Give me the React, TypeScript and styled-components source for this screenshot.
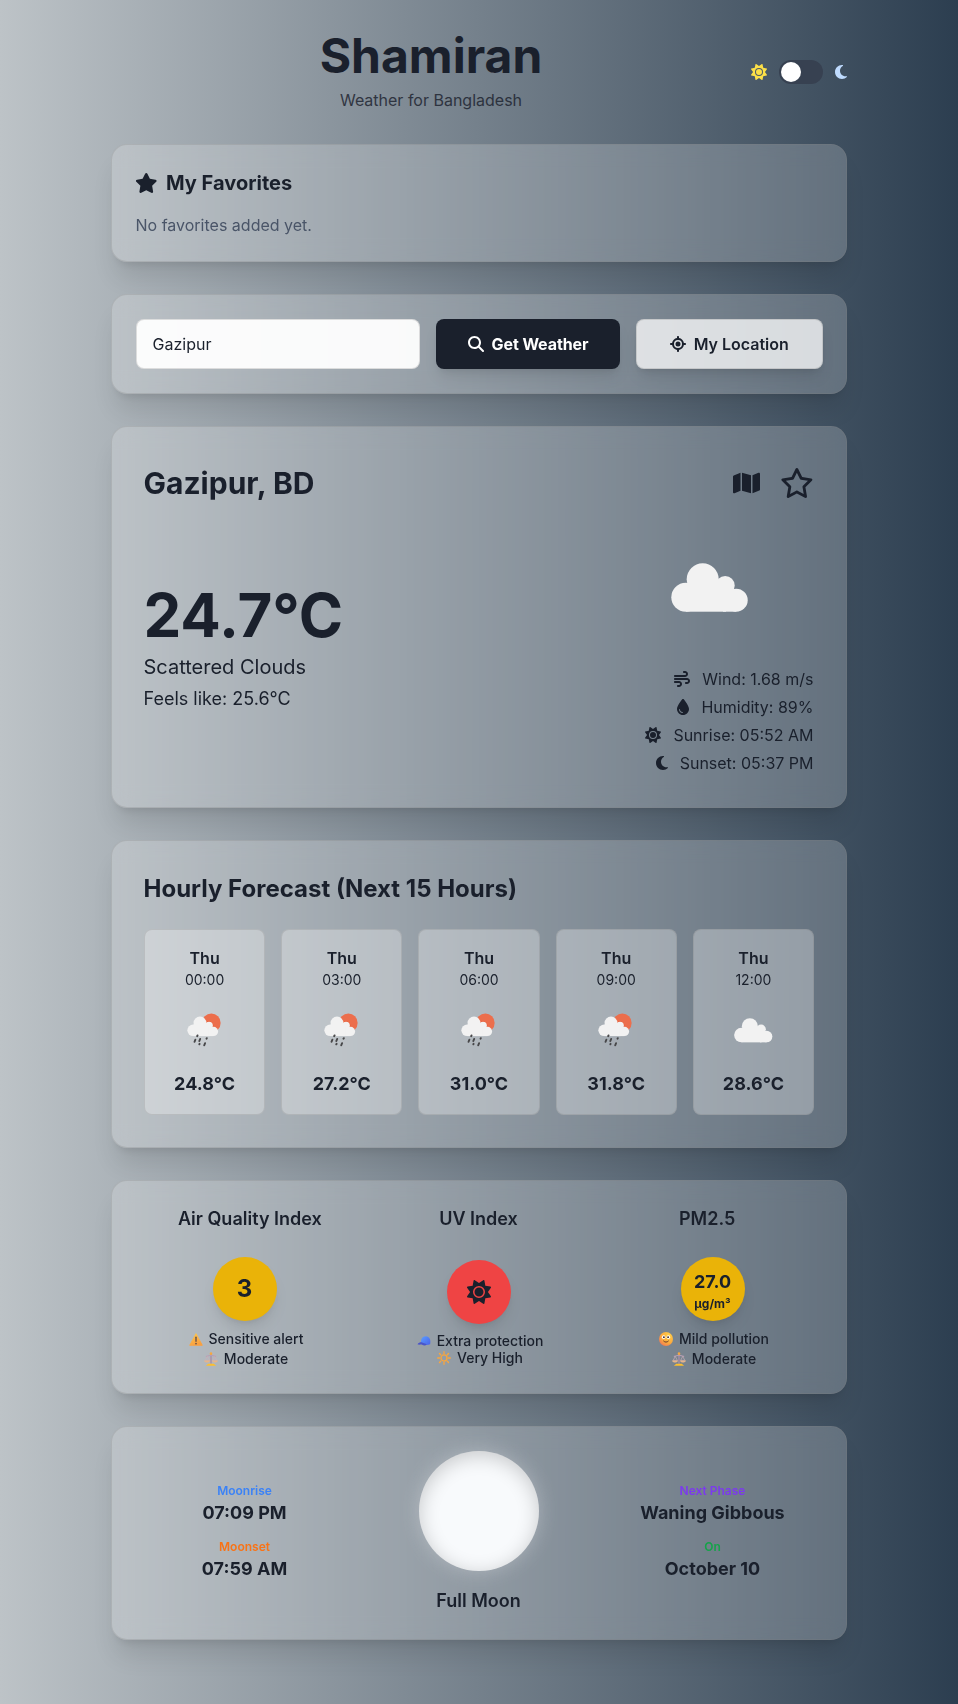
import React from "react";
import styled, { createGlobalStyle } from "styled-components";
import {
  FaSun,
  FaMoon,
  FaStar,
  FaRegStar,
  FaMap,
  FaWind,
  FaDroplet,
  FaMagnifyingGlass,
  FaLocationCrosshairs,
} from "react-icons/fa6";

const GlobalStyle = createGlobalStyle`
  *, *::before, *::after { box-sizing: border-box; }
  body { margin: 0; }
  h1, h2, h3, p { margin: 0; }
  svg { display: block; flex-shrink: 0; }
`;

const Page = styled.div`
  min-height: 100vh;
  padding: 32px 0;
  background: linear-gradient(to right, #bdc3c7, #2c3e50);
  color: #1a202c;
  font-family: Inter, "Liberation Sans", sans-serif;
  font-size: 16px;
  line-height: 24px;
`;

const Container = styled.main`
  max-width: 768px;
  margin: 0 auto;
  padding: 0 16.5px 0 15.5px;
  display: flex;
  flex-direction: column;
  gap: 32px;
`;

const Icon = styled.span<{ $w: number; $h: number; $color?: string }>`
  display: block;
  flex-shrink: 0;
  color: ${(p) => p.$color ?? "inherit"};
  svg {
    width: ${(p) => p.$w}px;
    height: ${(p) => p.$h}px;
  }
`;

const Header = styled.header`
  display: flex;
  align-items: center;
  height: 80px;
`;

const Brand = styled.div`
  flex: 1;
  padding-left: 1px;
  text-align: center;
`;

const Title = styled.h1`
  font-size: 48px;
  line-height: 48px;
  font-weight: 700;
`;

const Subtitle = styled.p`
  margin-top: 8px;
  opacity: 0.8;
`;

const ThemeSwitch = styled.div`
  display: flex;
  align-items: center;
  gap: 12px;
`;

const Track = styled.span`
  width: 44px;
  height: 24px;
  padding: 2px;
  border-radius: 12px;
  background: #374151;
`;

const Knob = styled.span`
  display: block;
  width: 20px;
  height: 20px;
  border-radius: 50%;
  background: #fff;
`;

const Card = styled.section<{ $pad?: number }>`
  padding: ${(p) => p.$pad ?? 24}px;
  border: 1px solid rgba(128, 128, 128, 0.25);
  border-radius: 16px;
  background: rgba(255, 255, 255, 0.2);
  backdrop-filter: blur(10px);
  box-shadow: 0 20px 25px -5px rgba(0, 0, 0, 0.1), 0 8px 10px -6px rgba(0, 0, 0, 0.1);
`;

const CardTitle = styled.h2`
  display: flex;
  align-items: center;
  gap: 8.5px;
  margin: 0 0 16px -0.5px;
  font-size: 20px;
  line-height: 28px;
  font-weight: 700;
`;

const Muted = styled.p`
  color: #4a5568;
`;

const SearchRow = styled.div`
  display: flex;
  gap: 16px;
  margin-right: -1px;
`;

const CityInput = styled.input`
  flex: 1;
  min-width: 0;
  height: 50px;
  padding: 0 16px;
  border: 1px solid rgba(128, 128, 128, 0.25);
  border-radius: 8px;
  background: rgba(255, 255, 255, 0.95);
  color: #1a202c;
  font: inherit;
  outline: none;
`;

const Button = styled.button<{ $primary?: boolean }>`
  display: flex;
  align-items: center;
  justify-content: center;
  gap: 8px;
  width: ${(p) => (p.$primary ? 184 : 186.5)}px;
  height: 50px;
  padding: 0;
  white-space: nowrap;
  border: ${(p) => (p.$primary ? "none" : "1px solid rgba(128, 128, 128, 0.25)")};
  border-radius: 8px;
  background: ${(p) => (p.$primary ? "#1a202c" : "rgba(255, 255, 255, 0.75)")};
  color: ${(p) => (p.$primary ? "#fff" : "#1a202c")};
  font: inherit;
  font-weight: ${(p) => (p.$primary ? 700 : 600)};
  letter-spacing: ${(p) => (p.$primary ? "-0.1px" : "normal")};
  box-shadow: 0 10px 15px -3px rgba(0, 0, 0, 0.1), 0 4px 6px -4px rgba(0, 0, 0, 0.1);
`;

const PlaceRow = styled.div`
  display: flex;
  align-items: center;
  justify-content: space-between;
  height: 48px;
  margin-bottom: 16px;
`;

const PlaceName = styled.h2`
  font-size: 30px;
  line-height: 36px;
  font-weight: 700;
`;

const PlaceActions = styled.div`
  display: flex;
  align-items: center;
  gap: 20px;
  svg { margin-top: -1px; }
`;

const NowRow = styled.div`
  display: flex;
  align-items: center;
  justify-content: space-between;
`;

const Temperature = styled.p`
  font-size: 60px;
  line-height: 60px;
  font-weight: 700;
`;

const Condition = styled.p`
  margin-top: 8px;
  font-size: 20px;
  line-height: 28px;
`;

const FeelsLike = styled.p`
  margin-top: 4px;
  font-size: 18px;
  line-height: 28px;
`;

const Details = styled.ul`
  margin: 16px 0 0;
  padding: 0;
  list-style: none;
  display: flex;
  flex-direction: column;
  gap: 4px;
`;

const Detail = styled.li`
  display: flex;
  align-items: center;
  justify-content: flex-end;
  gap: 12px;
`;

const SectionTitle = styled.h2`
  margin-bottom: 24px;
  font-size: 24px;
  line-height: 32px;
  font-weight: 700;
`;

const Hours = styled.div`
  display: grid;
  grid-template-columns: repeat(5, 1fr);
  gap: 16px;
  margin: 0 -0.5px 0 0.5px;
`;

const Hour = styled.div`
  display: flex;
  flex-direction: column;
  align-items: center;
  padding: 16px;
  border: 1px solid rgba(128, 128, 128, 0.25);
  border-radius: 8px;
  background: rgba(255, 255, 255, 0.3);
  svg { margin: 8px 0; }
`;

const HourDay = styled.p`
  font-weight: 600;
`;

const HourTime = styled.p`
  font-size: 14px;
  line-height: 20px;
`;

const HourTemp = styled.p`
  font-size: 18px;
  line-height: 28px;
  font-weight: 700;
  white-space: nowrap;
`;

const Columns = styled.div<{ $gap?: number }>`
  display: grid;
  grid-template-columns: repeat(3, 1fr);
  column-gap: ${(p) => p.$gap ?? 0}px;
  align-items: center;
`;

const IndexTitle = styled.h3`
  margin-bottom: 24px;
  font-size: 18px;
  line-height: 28px;
  font-weight: 600;
  text-align: center;
`;

const Index = styled.div<{ $tight?: boolean }>`
  display: flex;
  flex-direction: column;
  align-items: center;
  font-size: 14px;
  line-height: ${(p) => (p.$tight ? "17px" : "20px")};
  font-weight: 500;
`;

const Badge = styled.div<{ $color: string }>`
  display: flex;
  flex-direction: column;
  align-items: center;
  justify-content: center;
  width: 64px;
  height: 64px;
  margin-bottom: 8px;
  border-radius: 50%;
  background: ${(p) => p.$color};
  font-size: 24px;
  line-height: 32px;
  font-weight: 700;
  box-shadow: 0 10px 15px -3px rgba(0, 0, 0, 0.1), 0 4px 6px -4px rgba(0, 0, 0, 0.1);
`;

const BadgeValue = styled.span`
  padding-top: 2px;
  font-size: 18px;
  line-height: 28px;
`;

const BadgeUnit = styled.span`
  font-size: 12px;
  line-height: 16px;
`;

const Note = styled.p`
  display: flex;
  align-items: center;
  gap: 6px;
  padding-left: 3px;
  white-space: nowrap;
`;

const MoonColumn = styled.div`
  display: flex;
  flex-direction: column;
  align-items: center;
`;

const MoonFacts = styled.div`
  display: flex;
  flex-direction: column;
  gap: 12px;
  text-align: center;
`;

const FactLabel = styled.p<{ $color: string }>`
  color: ${(p) => p.$color};
  font-size: 12px;
  line-height: 16px;
  font-weight: 600;
`;

const FactValue = styled.p`
  font-size: 18px;
  line-height: 28px;
  font-weight: 700;
`;

const MoonDisc = styled.div`
  width: 120px;
  height: 120px;
  margin-bottom: 16px;
  border-radius: 50%;
  background: #f8fafc;
  box-shadow: inset 0 4px 20px rgba(0, 0, 0, 0.2), 0 0 20px rgba(248, 250, 252, 0.3);
`;

const MoonName = styled.p`
  font-size: 18px;
  line-height: 28px;
  font-weight: 600;
`;

const CloudShape = () => (
  <g fill="#f2f2f2">
    <circle cx="40.8" cy="74.2" r="14.5" />
    <circle cx="57.7" cy="56.3" r="16" />
    <circle cx="80.2" cy="62.5" r="9.5" />
    <circle cx="91.2" cy="77.2" r="11.5" />
    <rect x="41" y="60" width="40" height="28.7" />
    <rect x="78" y="66" width="13.2" height="22.7" />
  </g>
);

const CloudIcon = ({ size }: { size: number }) => (
  <svg width={size} height={size} viewBox="0 0 128 128">
    <CloudShape />
  </svg>
);

const RainIcon = () => (
  <svg width="64" height="64" viewBox="1.5 0 128 128">
    <circle cx="78.2" cy="49.8" r="18.6" fill="#ec6e4c" />
    <circle cx="73" cy="56" r="9.5" fill="#e0522a" opacity="0.6" />
    <g transform="translate(9 4.8) scale(0.805)">
      <CloudShape />
    </g>
    <g stroke="#48484a" strokeWidth="4" strokeLinecap="round">
      <path d="M50.500 75l-.6 1.200M46.200 83.500l-1.600 4M55.800 82l-1.600 4M69 80.500l-.4 .8M65.600 90.500l-1.600 4M54.600 91.800l-.4 .8" />
    </g>
  </svg>
);

const WarningEmoji = () => (
  <svg width="14" height="14" viewBox="0 0 30 30">
    <defs>
      <linearGradient id="warn" x1="0" y1="0" x2="0.4" y2="1">
        <stop offset="0" stopColor="#ffc94d" />
        <stop offset="1" stopColor="#f9a040" />
      </linearGradient>
    </defs>
    <path d="M15 3.500L28.500 28.500h-27z" fill="url(#warn)" stroke="url(#warn)" strokeWidth="2" strokeLinejoin="round" />
    <path d="M15 11v9" stroke="#5d4a4a" strokeWidth="2.800" strokeLinecap="round" />
    <circle cx="15" cy="25" r="1.700" fill="#5d4a4a" />
  </svg>
);

const ScaleEmoji = () => (
  <svg width="14" height="14" viewBox="0 0 30 30" fill="none">
    <path d="M15 5v20" stroke="#a88fa6" strokeWidth="3" />
    <path d="M4 9.500c5 0 6-2.500 11-2.500s6 2.500 11 2.500" stroke="#b79fb4" strokeWidth="2.400" />
    <path d="M7 9.500L2.500 18h9zM23 9.500L18.500 18h9z" stroke="#c9aeb8" strokeWidth="1.500" />
    <path d="M0 18h13c-1 6-12 6-13 0zM17 18h13c-1 6-12 6-13 0z" fill="#e5b48c" />
    <circle cx="15" cy="3.500" r="2.800" fill="#f5a742" />
    <path d="M9 25h12l5 4.500H4z" fill="#fdbf2d" />
  </svg>
);

const CapEmoji = () => (
  <svg width="14" height="14" viewBox="0 0 30 30">
    <defs>
      <linearGradient id="cap" x1="0" y1="0" x2="1" y2="1">
        <stop offset="0" stopColor="#5b9dff" />
        <stop offset="1" stopColor="#4a62e8" />
      </linearGradient>
    </defs>
    <path d="M9 20C7 11 12 5 19 5c8 0 11 8 9 17-5 3-14 2-19-2z" fill="url(#cap)" />
    <path d="M1 22c3-4 7-5 10-4l10 4c-3 4-7 3-10 1-3-1-7 1-10-1z" fill="#4a55c8" />
  </svg>
);

const SunEmoji = () => (
  <svg width="14" height="14" viewBox="0 0 30 30" fill="none" stroke="#fba63c" strokeLinecap="round">
    <circle cx="15" cy="15" r="6.500" strokeWidth="2.800" />
    <path
      d="M15 1.500v4M15 24.500v4M1.500 15h4M24.500 15h4M5.300 5.300l2.600 2.600M22.100 22.100l2.600 2.600M5.300 24.700l2.600-2.600M22.100 7.900l2.600-2.600"
      strokeWidth="2.800"
    />
  </svg>
);

const SmileEmoji = () => (
  <svg width="14" height="14" viewBox="0 0 30 30">
    <defs>
      <radialGradient id="face" cx="0.7" cy="0.25" r="0.9">
        <stop offset="0" stopColor="#ffd04a" />
        <stop offset="0.6" stopColor="#fbaa3e" />
        <stop offset="1" stopColor="#f1705a" />
      </radialGradient>
    </defs>
    <circle cx="15" cy="15" r="15" fill="url(#face)" />
    <circle cx="10" cy="11" r="3.800" fill="#fff" />
    <circle cx="20" cy="11" r="3.800" fill="#fff" />
    <circle cx="10.500" cy="11" r="2" fill="#402a32" />
    <circle cx="19.500" cy="11" r="2" fill="#402a32" />
    <path d="M10 19.500c3 3 7 3 10 0" fill="none" stroke="#5a2e2e" strokeWidth="2" strokeLinecap="round" />
  </svg>
);

const hours = [
  { time: "00:00", temp: "24.8°C", rain: true },
  { time: "03:00", temp: "27.2°C", rain: true },
  { time: "06:00", temp: "31.0°C", rain: true },
  { time: "09:00", temp: "31.8°C", rain: true },
  { time: "12:00", temp: "28.6°C", rain: false },
];

export default function App() {
  return (
    <>
      <GlobalStyle />
      <Page>
        <Container>
          <Header>
            <Brand>
              <Title>Shamiran</Title>
              <Subtitle>Weather for Bangladesh</Subtitle>
            </Brand>
            <ThemeSwitch>
              <Icon $w={16} $h={16} $color="#fde047">
                <FaSun />
              </Icon>
              <Track>
                <Knob />
              </Track>
              <Icon $w={12} $h={16} $color="#bfdbfe">
                <FaMoon />
              </Icon>
            </ThemeSwitch>
          </Header>

          <Card>
            <CardTitle>
              <Icon $w={22.5} $h={20}>
                <FaStar />
              </Icon>
              My Favorites
            </CardTitle>
            <Muted>No favorites added yet.</Muted>
          </Card>

          <Card>
            <SearchRow>
              <CityInput defaultValue="Gazipur" aria-label="City" />
              <Button $primary>
                <Icon $w={16} $h={16}>
                  <FaMagnifyingGlass />
                </Icon>
                Get Weather
              </Button>
              <Button>
                <Icon $w={16} $h={16}>
                  <FaLocationCrosshairs />
                </Icon>
                My Location
              </Button>
            </SearchRow>
          </Card>

          <Card $pad={32}>
            <PlaceRow>
              <PlaceName>Gazipur, BD</PlaceName>
              <PlaceActions>
                <Icon $w={27} $h={24}>
                  <FaMap />
                </Icon>
                <Icon $w={33.75} $h={30}>
                  <FaRegStar />
                </Icon>
              </PlaceActions>
            </PlaceRow>
            <NowRow>
              <div>
                <Temperature>24.7°C</Temperature>
                <Condition>Scattered Clouds</Condition>
                <FeelsLike>Feels like: 25.6°C</FeelsLike>
              </div>
              <div>
                <CloudIcon size={128} />
                <Details>
                  <Detail>
                    <Icon $w={16} $h={16}>
                      <FaWind />
                    </Icon>
                    <span>Wind: 1.68 m/s</span>
                  </Detail>
                  <Detail>
                    <Icon $w={12} $h={16}>
                      <FaDroplet />
                    </Icon>
                    <span>Humidity: 89%</span>
                  </Detail>
                  <Detail>
                    <Icon $w={16} $h={16}>
                      <FaSun />
                    </Icon>
                    <span>Sunrise: 05:52 AM</span>
                  </Detail>
                  <Detail>
                    <Icon $w={12} $h={16}>
                      <FaMoon />
                    </Icon>
                    <span>Sunset: 05:37 PM</span>
                  </Detail>
                </Details>
              </div>
            </NowRow>
          </Card>

          <Card $pad={32}>
            <SectionTitle>Hourly Forecast (Next 15 Hours)</SectionTitle>
            <Hours>
              {hours.map((h) => (
                <Hour key={h.time}>
                  <HourDay>Thu</HourDay>
                  <HourTime>{h.time}</HourTime>
                  {h.rain ? <RainIcon /> : <CloudIcon size={64} />}
                  <HourTemp>{h.temp}</HourTemp>
                </Hour>
              ))}
            </Hours>
          </Card>

          <Card>
            <Columns>
              <IndexTitle>Air Quality Index</IndexTitle>
              <IndexTitle>UV Index</IndexTitle>
              <IndexTitle>PM2.5</IndexTitle>
            </Columns>
            <Columns $gap={16}>
              <Index>
                <Badge $color="#eab308">3</Badge>
                <Note>
                  <WarningEmoji />
                  Sensitive alert
                </Note>
                <Note>
                  <ScaleEmoji />
                  Moderate
                </Note>
              </Index>
              <Index $tight>
                <Badge $color="#ef4444">
                  <Icon $w={24} $h={24}>
                    <FaSun />
                  </Icon>
                </Badge>
                <Note>
                  <CapEmoji />
                  Extra protection
                </Note>
                <Note>
                  <SunEmoji />
                  Very High
                </Note>
              </Index>
              <Index>
                <Badge $color="#eab308">
                  <BadgeValue>27.0</BadgeValue>
                  <BadgeUnit>μg/m³</BadgeUnit>
                </Badge>
                <Note>
                  <SmileEmoji />
                  Mild pollution
                </Note>
                <Note>
                  <ScaleEmoji />
                  Moderate
                </Note>
              </Index>
            </Columns>
          </Card>

          <Card>
            <Columns $gap={16}>
              <MoonFacts>
                <div>
                  <FactLabel $color="#3b82f6">Moonrise</FactLabel>
                  <FactValue>07:09 PM</FactValue>
                </div>
                <div>
                  <FactLabel $color="#f97316">Moonset</FactLabel>
                  <FactValue>07:59 AM</FactValue>
                </div>
              </MoonFacts>
              <MoonColumn>
                <MoonDisc />
                <MoonName>Full Moon</MoonName>
              </MoonColumn>
              <MoonFacts>
                <div>
                  <FactLabel $color="#7c3aed">Next Phase</FactLabel>
                  <FactValue>Waning Gibbous</FactValue>
                </div>
                <div>
                  <FactLabel $color="#16a34a">On</FactLabel>
                  <FactValue>October 10</FactValue>
                </div>
              </MoonFacts>
            </Columns>
          </Card>
        </Container>
      </Page>
    </>
  );
}
